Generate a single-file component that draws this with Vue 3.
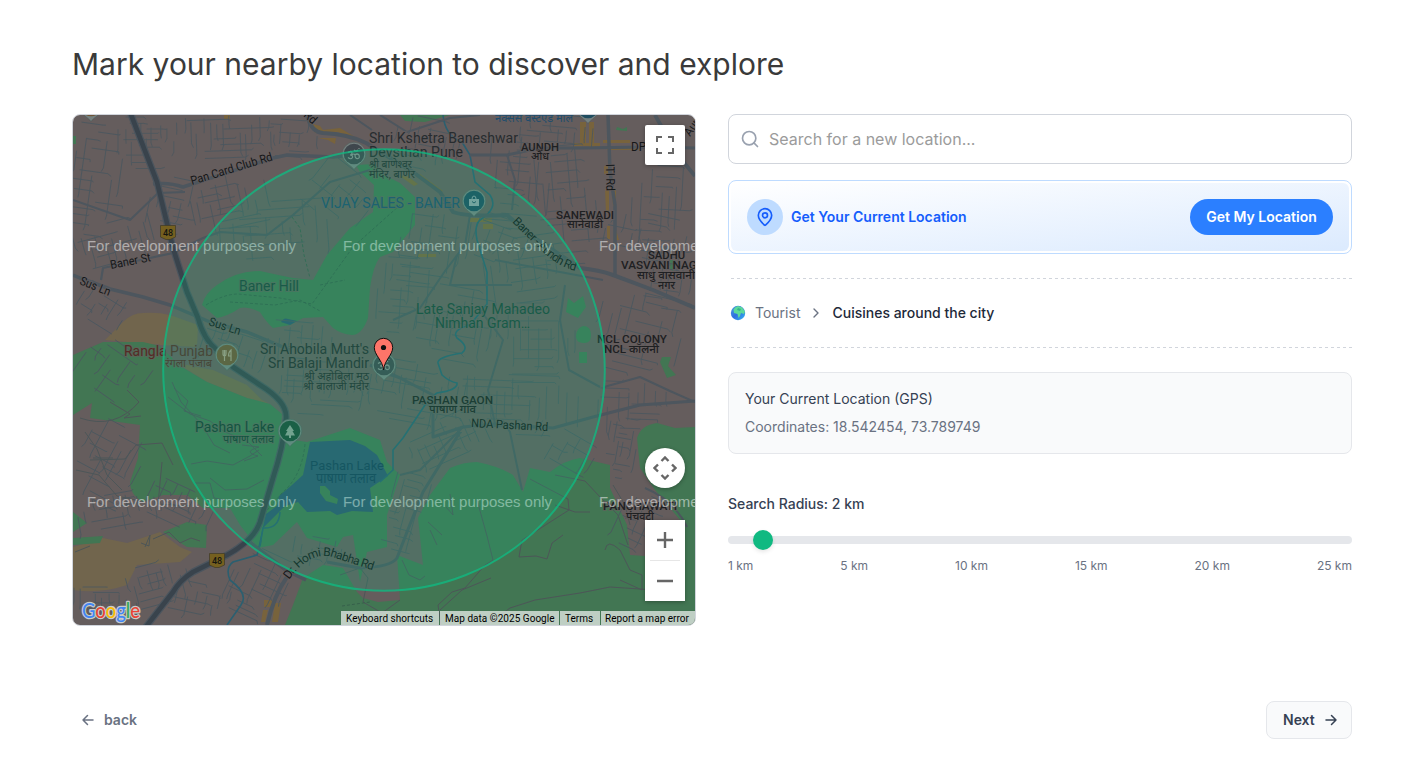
<script setup>
import { ref } from 'vue'

const ticks = ['1 km', '5 km', '10 km', '15 km', '20 km', '25 km']
const radius = ref(2)
const query = ref('')

const parks = [
  'M202 305Q205 293 217 285Q236 271 260 271Q278 275 293 278L313 280L327 255L350 228L373 212L374 185L360 172L356 165L374 164L384 175L400 183L415 197V225L393 252L380 257Q373 266 370 288L368 318Q362 335 352 335Q341 334 333 328L323 317L303 318L290 325L273 328Q266 322 260 312Q248 306 240 308Q228 316 217 318Z',
  'M73 355L103 342L143 342L160 346L180 366L207 382L247 398L270 404L282 414L280 438L307 442L350 428L380 440L387 462L400 475L387 515V547L367 552L360 582L353 535L343 537L337 547L307 538L297 522L273 545L258 548L240 525L230 508H203L187 495H163L143 502Q130 495 130 482L138 458L140 425L90 418L92 403L73 415Z',
  'M73 512L87 523L73 532ZM73 538L103 536L100 543L73 545Z',
  'M163 532L187 522L207 525L206 548L187 547Z',
  'M303 578L323 565L343 568L357 592L363 598L378 602L400 600L397 555L423 565L418 518L430 495L450 468Q463 462 477 462Q498 466 513 475L523 492L530 468L550 472Q565 460 580 458L610 465V488L627 525L630 555L645 556L680 520L655 490L640 468L637 438Q641 425 657 423L675 428L695 427V625H285L293 605Z',
  'M400 115H450L425 122L405 121ZM670 260H675L673 271L670 269ZM662 357H671L668 366L676 375L667 378L660 362ZM568 298L574 303L583 296L586 307L578 318L566 312ZM579 352H587V363H579ZM617 127L623 129L627 127V131L616 130ZM73 136H76V144H73Z',
  'M583 326Q591 326 591 335T583 343T576 335T583 326Z'
]
const tans = [
  'M105 340L123 322Q132 313 143 313Q158 312 170 315L198 325L197 347L160 345Z',
  'M177 363L207 369L213 370L247 385L262 400L270 404L247 398L207 382L183 367Z',
  'M73 547L103 538L127 543L160 532L180 547L192 552L180 562L137 565L127 585Q100 594 73 590Z'
]
const yellow = [
  'M580 122H586V144H580ZM589 122H594V147H589ZM574 143H600V146H574ZM603 140H630V143H603ZM607 146H640V150H607ZM604 166H608V174H604ZM605 189H609V213H606ZM612 189H616V206H613ZM607 226H610V239H607ZM615 226L619 240H616ZM313 124L320 126L323 130L340 128L355 137L350 139L338 132L315 133ZM318 138L336 138L335 144L328 140ZM400 176L406 175L418 184L414 186ZM420 174L443 191L440 192L420 179ZM470 218H492V222H470ZM483 224H493V229H483ZM418 254H436V257H418ZM224 115H230V119H224ZM264 600H272V607H264ZM275 603H281L278 622H272ZM263 610H268L265 622H261Z'
]
const roads = [
  { w: 3.5, d: 'M153 184Q169 182 183 187L273 158L287 155L333 157L352 155' },
  { w: 4, d: 'M307 115Q311 132 323 133Q348 134 366 143L413 172L440 192L453 212Q466 217 507 215L530 235L580 268Q599 270 613 275L653 290L695 308' },
  { w: 3.5, d: 'M73 275L80 278L110 289L143 297L170 305L210 322L247 332L290 350' },
  { w: 2.2, d: 'M101 280L103 268L150 258L173 253L203 238L220 232L267 235L293 215L330 182L370 170' },
  { w: 3, d: 'M370 365L400 378L433 395V437L463 427L495 424L553 428L593 417L640 405L695 401' },
  { w: 3.5, d: 'M608 115L610 172L615 205V275' },
  { w: 3, d: 'M470 155L507 155L540 148H580L647 147L695 148' },
  { w: 3.8, d: 'M655 115Q667 137 681 159L695 176' },
  { w: 3.5, d: 'M247 540L287 571L306 580' },
  { w: 4, d: 'M267 625Q274 595 287 577' },
  { w: 3, d: 'M327 562L360 568Q391 567 397 558L407 532L423 492L460 432' },
  { w: 2, d: 'M380 115L407 132L450 118L480 115M350 115L372 130M507 155L515 180L512 210M457 255L450 285L512 285M463 427L420 470L400 475M503 421L510 432L522 490M645 488Q674 500 687 527M73 200L130 220L158 193L185 192' },
  { w: 2, d: 'M470 215L465 245L445 271L420 308L393 320M495 260L560 272L603 280M480 310L503 340L488 390L495 424M565 285L560 320L569 370L600 387M604 387L640 377L670 391L695 402' }
]
const river = [
  'M443 115Q445 136 462 142L470 155L475 182L490 195Q499 208 480 220Q474 225 477 240L487 272V304L470 325Q451 330 457 338Q470 347 462 353Q437 357 438 363L442 375Q450 382 457 383Q458 390 437 393Q429 398 423 408L403 438L393 450V470L380 482',
  'M280 512Q279 529 263 528L260 545L257 555L233 562Q225 568 230 580Q249 594 241 605L227 625'
]
const trails = [
  'M292 217L300 228L304 255L310 278',
  'M206 305Q224 294 238 294L280 298L312 304L353 247L400 205M320 285L345 280M230 302L275 305L300 300L320 311',
  'M305 444Q302 476 282 493L263 515M342 606L370 602'
]
const paths = [
  'M172 382L181 402L202 425L214 445L230 453M168 397L190 414L210 421L225 432L247 441L262 456M191 464L207 461L233 465L250 456L259 450M210 478L225 490L247 489L264 480M90 460L125 459L136 445L162 443L173 465M174 388L188 401L184 411L201 416M242 445L259 447Q242 452 258 456L244 461M80 418Q115 430 139 402L127 390M110 402L130 414L124 418L141 416M195 483L210 483L214 498L225 500M162 462L158 504L190 506',
  'M519 557L522 540L569 510L568 499L530 479M519 557L536 556L547 559L552 543L563 535M477 500L487 536L493 560L485 565L465 588L452 592L438 605L441 625M440 610L462 590L491 578M487 625L510 608L535 600L580 593L610 587L655 590M555 475L585 481L600 497L618 515L628 545M613 485L625 505L630 525M605 550Q607 538 620 550L630 570L642 575V590L620 580M555 505L575 512L590 512M450 494L453 515L446 507M428 522L442 535M430 530L437 545M402 560L409 575L420 580L425 576M340 575L360 568L368 578L363 602L382 613L400 600',
  'M153 539L169 532L180 543L191 538L200 541M145 547L150 535L149 546L141 543M75 552L90 546M85 432L97 449L107 475L122 490M93 458L113 458M76 470L99 475L117 496L140 501'
]

// Irregular street grids: centre, half extents, rotation, line spacing.
const districts = [
  [98, 185, 26, 60, 8, 9], [148, 143, 30, 26, 0, 7], [225, 136, 48, 24, -2, 8], [232, 205, 40, 32, -12, 9],
  [118, 245, 42, 24, -15, 9], [102, 310, 25, 20, 32, 8], [175, 206, 26, 28, 12, 10], [293, 140, 25, 20, 4, 8],
  [280, 235, 60, 34, -4, 12], [340, 195, 32, 28, 38, 10], [430, 145, 35, 26, 12, 9], [520, 185, 32, 50, 5, 9],
  [570, 205, 32, 60, -5, 9], [660, 200, 28, 55, 3, 9], [560, 135, 40, 20, 5, 8], [648, 240, 44, 26, 12, 9],
  [438, 245, 38, 42, 8, 8], [525, 275, 40, 38, -8, 10], [405, 300, 28, 42, 4, 8], [455, 325, 40, 38, 10, 8],
  [535, 345, 44, 42, 0, 9], [640, 335, 44, 42, 14, 10], [415, 395, 52, 32, 10, 8], [325, 390, 44, 28, 3, 8],
  [520, 405, 64, 30, 2, 9], [452, 440, 42, 24, -24, 9], [636, 408, 38, 26, 2, 9], [622, 450, 16, 32, 10, 7],
  [565, 450, 34, 18, 30, 10], [640, 522, 22, 28, 25, 8], [235, 350, 34, 17, 18, 8], [405, 515, 18, 42, 15, 8],
  [108, 466, 31, 42, 28, 10], [120, 514, 42, 21, -10, 9], [180, 507, 34, 20, 25, 9], [108, 605, 34, 18, 0, 8],
  [160, 584, 32, 22, -15, 8], [200, 604, 32, 20, 12, 9], [260, 585, 30, 34, 25, 8], [320, 552, 27, 14, 10, 8],
  [111, 376, 34, 32, 35, 13], [300, 342, 32, 20, 5, 9], [500, 245, 28, 27, 20, 10], [668, 280, 24, 30, 8, 8]
]
let seed = 4817
const rnd = () => {
  seed = (seed * 16807) % 2147483647
  return seed / 2147483647
}
const streets = districts.map(([x, y, w, h, a, s]) => {
  let d = ''
  for (let v = -h; v < h; v += s * (0.6 + rnd() * 0.7)) {
    const start = -w + rnd() * w
    d += `M${start.toFixed(1)} ${v.toFixed(1)}h${(w * (0.4 + rnd() * 0.7)).toFixed(1)}l${(rnd() * 4).toFixed(1)} ${(rnd() * 5 - 2).toFixed(1)}`
  }
  for (let u = -w; u < w; u += s * (0.6 + rnd() * 0.8)) {
    const start = -h + rnd() * h
    d += `M${u.toFixed(1)} ${start.toFixed(1)}v${(h * (0.3 + rnd() * 0.7)).toFixed(1)}l${(rnd() * 4 - 2).toFixed(1)} 4`
  }
  return { d, t: `translate(${x} ${y}) rotate(${a})` }
})

// x is the left edge, w the drawn width of the label.
const labels = [
  { t: 'Shri Kshetra Baneshwar', x: 369, y: 143, w: 149, c: 'poi' },
  { t: 'Devsthan Pune', x: 369, y: 157, w: 94, c: 'poi' },
  { t: 'श्री बाणेश्वर', x: 369, y: 168, w: 43, c: 'poi hi' },
  { t: 'मंदिर, बाणेर', x: 369, y: 178, w: 46, c: 'poi hi' },
  { t: 'VIJAY SALES - BANER', x: 321, y: 208, w: 139, c: 'poi shop' },
  { t: 'Baner Hill', x: 239, y: 291, w: 60, c: 'poi nature' },
  { t: 'Late Sanjay Mahadeo', x: 416, y: 314, w: 134, c: 'poi nature' },
  { t: 'Nimhan Gram…', x: 435, y: 328, w: 95, c: 'poi nature' },
  { t: 'Rangla Punjab', x: 124, y: 356, w: 89, c: 'poi food' },
  { t: 'रंगला पंजाब', x: 165, y: 367, w: 47, c: 'poi food hi' },
  { t: "Sri Ahobila Mutt's", x: 260, y: 354, w: 109, c: 'poi' },
  { t: 'Sri Balaji Mandir', x: 268, y: 368, w: 101, c: 'poi' },
  { t: 'श्री अहोबिला मठ', x: 304, y: 380, w: 65, c: 'poi hi' },
  { t: 'श्री बालाजी मंदीर', x: 303, y: 390, w: 66, c: 'poi hi' },
  { t: 'Pashan Lake', x: 195, y: 432, w: 79, c: 'poi nature dark' },
  { t: 'पाषाण तलाव', x: 223, y: 443, w: 51, c: 'poi nature dark hi' },
  { t: 'Pashan Lake', x: 310, y: 470, w: 74, c: 'water' },
  { t: 'पाषाण तलाव', x: 316, y: 483, w: 60, c: 'water hi12' },
  { t: 'AUNDH', x: 521, y: 151, w: 38, c: 'area' },
  { t: 'औंध', x: 531, y: 160, w: 18, c: 'area hi' },
  { t: 'SANEWADI', x: 556, y: 219, w: 58, c: 'area' },
  { t: 'सानेवाडी', x: 567, y: 228, w: 36, c: 'area hi' },
  { t: 'SADHU', x: 648, y: 259, w: 37, c: 'area' },
  { t: 'VASVANI NAGAR', x: 621, y: 269, w: 91, c: 'area' },
  { t: 'साधु वासवानी', x: 637, y: 279, w: 58, c: 'area hi' },
  { t: 'नगर', x: 658, y: 289, w: 17, c: 'area hi' },
  { t: 'NCL COLONY', x: 597, y: 343, w: 70, c: 'area' },
  { t: 'NCL कॉलनी', x: 604, y: 353, w: 55, c: 'area hi' },
  { t: 'PASHAN GAON', x: 412, y: 404, w: 81, c: 'area' },
  { t: 'पाषाण गांव', x: 429, y: 413, w: 47, c: 'area hi' },
  { t: 'PANCHAWATI', x: 603, y: 510, w: 74, c: 'area' },
  { t: 'पंचवटी', x: 626, y: 520, w: 28, c: 'area hi' },
  { t: 'नेक्सस वेस्टएंड मॉल', x: 495, y: 122, w: 78, c: 'poi shop hi' },
  { t: 'DP Rd', x: 631, y: 151, w: 32, c: 'road' },
  { t: 'Pan Card Club Rd', x: 192, y: 185, w: 85, c: 'road', r: -17 },
  { t: 'Baner St', x: 111, y: 269, w: 41, c: 'road', r: -11 },
  { t: 'Sus Ln', x: 79, y: 284, w: 32, c: 'road', r: 22 },
  { t: 'Sus Ln', x: 208, y: 325, w: 33, c: 'road', r: 18 },
  { t: 'ITI Rd', x: 606, y: 164, w: 27, c: 'road', r: 89 },
  { t: 'NDA Pashan Rd', x: 471, y: 427, w: 77, c: 'road', r: 3 },
  { t: 'Rd', x: 303, y: 116, w: 13, c: 'road', r: 42 },
  { t: 'Aundh', x: 690, y: 137, w: 32, c: 'road', r: -55 }
]

const pins = [
  { x: 354, y: 155, f: '#3f474d', k: 'om' },
  { x: 474, y: 202, f: '#204d60', k: 'bag' },
  { x: 227, y: 356, f: '#6f5335', k: 'fork' },
  { x: 290, y: 432, f: '#1d4a37', k: 'tree' },
  { x: 384, y: 366, f: '#3f474d', k: 'om' },
  { x: 588, y: 109, f: '#204d60', k: 'bag' },
  { x: 91, y: 107, f: '#6f5335', k: 'fork' }
]
const watermarks = [[87, 251], [343, 251], [599, 251], [87, 507], [343, 507], [599, 507]]
</script>

<template>
  <main class="page">
    <h1>Mark your nearby location to discover and explore</h1>

    <div class="columns">
      <section class="map">
        <svg class="canvas" viewBox="73 115 622 510">
          <rect x="73" y="115" width="622" height="510" fill="#655d5d" />
          <path v-for="(d, i) in tans" :key="'t' + i" :d="d" fill="#71654d" />
          <path v-for="(d, i) in parks" :key="'p' + i" :d="d" fill="#427653" />
          <path d="M310 442L350 440L365 446L377 455L388 476L370 488L373 512L352 511L337 515L330 511L307 512L298 502L285 506L263 528L261 545L258 548L266 514L277 506L279 496L292 485L303 475Z" fill="#2f556f" />
          <path d="M320 486L325 486L330 491L330 495L338 499L337 504L326 501L320 493Z" fill="#427653" />
          <path d="M281 322Q284 317 288 319L297 321L290 325Z" fill="#2f556f" />
          <path v-for="(d, i) in yellow" :key="'y' + i" :d="d" fill="#78633c" />
          <g fill="none" stroke="#4b575f" stroke-width=".85">
            <path v-for="(s, i) in streets" :key="'s' + i" :d="s.d" :transform="s.t" />
          </g>
          <g fill="none" stroke="#4d5658" stroke-width="1" stroke-linejoin="round">
            <path v-for="(d, i) in paths" :key="'w' + i" :d="d" />
          </g>
          <g fill="none" stroke="#345b49" stroke-width=".8" stroke-dasharray="3 2">
            <path v-for="(d, i) in trails" :key="'r' + i" :d="d" />
          </g>
          <g fill="none" stroke="#2b5f70" stroke-width="1.6">
            <path v-for="(d, i) in river" :key="'v' + i" :d="d" />
          </g>
          <g fill="none" stroke="#4d565e" stroke-linejoin="round">
            <path v-for="(r, i) in roads" :key="'o' + i" :d="r.d" :stroke-width="r.w" />
          </g>
          <g fill="none" stroke-linejoin="round">
            <path class="highway-edge" d="M130 112L157 182L173 248L187 292L198 318Q204 340 217 350L233 367L260 385Q288 402 286 419Q283 448 273 478L260 522Q254 540 227 555L193 572Q180 580 173 592L145 628" />
            <path class="highway" d="M130 112L157 182L173 248L187 292L198 318Q204 340 217 350L233 367L260 385Q288 402 286 419Q283 448 273 478L260 522Q254 540 227 555L193 572Q180 580 173 592L145 628" />
          </g>
          <g v-for="(p, i) in [[168, 232], [217, 560]]" :key="'h' + i" :transform="`translate(${p[0]} ${p[1]})`">
            <path d="M-7.5-6.5H7.5V5L2 7.5H-2L-7.5 5Z" fill="#75601f" stroke="#3f3a26" stroke-width=".7" />
            <text class="shield" y="4">48</text>
          </g>

          <g v-for="(p, i) in pins" :key="'n' + i" :transform="`translate(${p.x} ${p.y})`">
            <path d="M0 14.500C-3 10-11.800 7-11.800-1A11.800 11.800 0 0 1 11.800-1C11.800 7 3 10 0 14.500Z" fill="#75807f" stroke="#505c5a" stroke-width=".6" />
            <circle cy="-1" r="10.3" :fill="p.f" />
            <path v-if="p.k === 'tree'" d="M0-7L4-1H2.500L5 3.500H1V6H-1V3.500H-5L-2.500-1H-4Z" fill="#8b9e93" />
            <g v-else-if="p.k === 'bag'"><path d="M-5-3H5V4H-5Z" fill="#8b9ea6" /><path d="M-2-3Q-2-6 0-6Q2-6 2-3" fill="none" stroke="#8b9ea6" /><path d="M-2-.5Q0 2.500 2-.5" fill="none" stroke="#204d60" /></g>
            <path v-else-if="p.k === 'fork'" d="M-4-6V-2Q-4 0-2.500 0T-1-2V-6M-2.500-6V5M4 5V-6Q1.500-4 1.500 0H4" fill="none" stroke="#a69984" stroke-width="1.2" />
            <path v-else d="M-6-2.500Q-2-5-2-2Q-2 0-4 0Q-1 0-1.500 2.500Q-3 5-6 2.500M-2 0Q0-2 1 0Q1 4 4 3.500Q6 3 5 0Q3-2 1 0M0-5Q2-3 4-5M5-7V-6" fill="none" stroke="#858e8c" stroke-width="1.200" />
          </g>

          <text
            v-for="(l, i) in labels" :key="'l' + i" :class="['label', l.c]" :textLength="l.w"
            lengthAdjust="spacingAndGlyphs" :transform="`translate(${l.x} ${l.y}) rotate(${l.r || 0})`"
          >{{ l.t }}</text>
          <path id="aundhRoad" d="M512 222Q528 238 543 252Q559 268 580 272" fill="none" />
          <text class="label road"><textPath href="#aundhRoad" textLength="81">Baner - Aundh Rd</textPath></text>
          <path id="homiRoad" d="M289 580Q311 549 335 558L375 571" fill="none" />
          <text class="label road"><textPath href="#homiRoad" textLength="95">Dr. Homi Bhabha Rd</textPath></text>

          <text v-for="(w, i) in watermarks" :key="'m' + i" class="watermark" :x="w[0]" :y="w[1]" textLength="209" lengthAdjust="spacingAndGlyphs">For development purposes only</text>
          <circle cx="384" cy="370" r="220.8" fill="#10b981" fill-opacity=".2" stroke="#10b981" stroke-opacity=".8" stroke-width="2" />

          <path d="M383.500 370C382.500 360 374.300 355 374.300 347.500A9.200 9.200 0 0 1 392.700 347.500C392.700 355 384.500 360 383.500 370Z" fill="#fe7569" stroke="#111" />
          <circle cx="383.5" cy="347.5" r="2.6" fill="#111" />

          <text class="brand" x="82" y="618" textLength="58" lengthAdjust="spacingAndGlyphs"><tspan fill="#4285f4">G</tspan><tspan fill="#ea4335">o</tspan><tspan fill="#fbbc04">o</tspan><tspan fill="#4285f4">g</tspan><tspan fill="#34a853">l</tspan><tspan fill="#ea4335">e</tspan></text>
        </svg>

        <button class="ctl full" aria-label="Fullscreen">
          <svg viewBox="0 0 18 18"><path d="M0 0v6h2V2h4V0H0zm16 0h-4v2h4v4h2V0h-2zm0 16h-4v2h6v-6h-2v4zM2 12H0v6h6v-2H2v-4z" fill="#666" /></svg>
        </button>
        <button class="ctl pan" aria-label="Map camera">
          <svg viewBox="0 0 24 24"><path d="M8.500 5L12 1.500L15.500 5M8.500 19L12 22.500L15.500 19M5 8.500L1.500 12L5 15.500M19 8.500L22.500 12L19 15.500" fill="none" stroke="#666" stroke-width="2.4" /></svg>
        </button>
        <div class="ctl zoom">
          <button aria-label="Zoom in"><svg viewBox="0 0 18 18"><path d="M1 9H17M9 1V17" stroke="#666" stroke-width="2.4" /></svg></button>
          <i></i>
          <button aria-label="Zoom out"><svg viewBox="0 0 18 18"><path d="M1 9H17" stroke="#666" stroke-width="2.4" /></svg></button>
        </div>
        <div class="credits">
          <span class="c1">Keyboard shortcuts</span><span class="c2">Map data ©2025 Google</span><span class="c3">Terms</span><span class="c4">Report a map error</span>
        </div>
      </section>

      <section class="panel">
        <label class="search">
          <svg viewBox="0 0 24 24"><circle cx="11" cy="11" r="8" /><path d="M21 21l-4.300-4.300" /></svg>
          <input v-model="query" placeholder="Search for a new location..." />
        </label>

        <div class="locate">
          <div class="locate-inner">
            <span class="badge">
              <svg viewBox="0 0 24 24"><path d="M20 10c0 4.990-5.540 10.190-7.400 11.800a1 1 0 0 1-1.200 0C9.540 20.190 4 14.990 4 10a8 8 0 0 1 16 0" /><circle cx="12" cy="10" r="3" /></svg>
            </span>
            <strong>Get Your Current Location</strong>
            <button>Get My Location</button>
          </div>
        </div>

        <nav class="crumbs">
          <svg class="globe" viewBox="0 0 16 16">
            <defs><linearGradient id="sea" x1="0" y1="0" x2="1" y2="1"><stop stop-color="#4a9fe0" /><stop offset=".5" stop-color="#2f6fe0" /><stop offset="1" stop-color="#35b8f2" /></linearGradient></defs>
            <circle cx="8" cy="8" r="7.2" fill="url(#sea)" />
            <path d="M3.500 4.500Q5 1.500 8 1L12 2.200L15 6.500L14 9L11 8L10 11L8.500 13L7.500 9L4 8Z" fill="#5bd99a" />
            <path d="M8 3L11 4L10 6L7 5Z" fill="#35b58b" />
          </svg>
          <span>Tourist</span>
          <svg class="chev" viewBox="0 0 16 16"><path d="M6 4l4 4-4 4" /></svg>
          <b>Cuisines around the city</b>
        </nav>

        <div class="gps">
          <p class="gps-title">Your Current Location (GPS)</p>
          <p>Coordinates: 18.542454, 73.789749</p>
        </div>

        <div class="radius">
          <p>Search Radius: {{ radius }} km</p>
          <div class="track"><span class="thumb"></span></div>
          <div class="ticks"><span v-for="t in ticks" :key="t">{{ t }}</span></div>
        </div>
      </section>
    </div>

    <footer>
      <button class="back">
        <svg viewBox="0 0 16 16"><path d="M13 8H3M7.500 3.500L3 8l4.500 4.500" /></svg>back
      </button>
      <button class="next">
        Next<svg viewBox="0 0 16 16"><path d="M3 8h10M8.500 3.500L13 8l-4.500 4.500" /></svg>
      </button>
    </footer>
  </main>
</template>

<style>
body { background: #fff; }
</style>

<style scoped>
* { box-sizing: border-box; }
.page {
  height: 774px; padding: 44px 70px 35px 72px; display: flex; flex-direction: column;
  font-family: Inter, "Liberation Sans", sans-serif; font-size: 14px; line-height: 20px; color: #364153;
}
h1 { margin: 0; height: 70px; font-size: 30px; line-height: 40px; font-weight: 400; color: #3a3a3a; white-space: nowrap; }
p { margin: 0; }
button { font: inherit; color: inherit; border: 0; padding: 0; background: none; }
.columns { display: grid; grid-template-columns: 624px 624px; gap: 32px; }

.map { position: relative; height: 512px; border: 1px solid #d1d5dc; border-radius: 8px; overflow: hidden; }
.canvas { display: block; width: 622px; height: 510px; }
.highway-edge { stroke: #4b555e; stroke-width: 7; }
.highway { stroke: #39434c; stroke-width: 4.6; }
.label { font-family: Roboto, "Noto Sans", sans-serif; font-size: 12px; fill: #222629; paint-order: stroke; stroke: #655d5d; stroke-opacity: .6; stroke-width: 2px; }
.label.poi { font-size: 14px; fill: #272c2f; }
.label.poi.hi, .label.hi { font-size: 11.5px; }
.label.water.hi12 { font-size: 13.5px; }
.label.poi.shop { fill: #204d6d; }
.label.poi.nature { fill: #1b443a; }
.label.poi.dark { fill: #153b30; }
.label.poi.food { fill: #552b26; }
.label.water { font-size: 13px; fill: #173e59; stroke: none; }
.label.area { font-size: 10.5px; font-weight: 500; fill: #1e2022; }
.label.road { font-size: 12px; fill: #151719; }
.label.area.hi { font-size: 11.5px; }
.shield { font: 500 9px Roboto, sans-serif; text-anchor: middle; fill: #16160f; }
.watermark { font: 15px "Liberation Sans", Arial, sans-serif; fill: #fff; fill-opacity: .5; }
.brand { font: 500 21px Lato, sans-serif; paint-order: stroke; stroke: #c8cccb; stroke-width: 2.5px; stroke-linejoin: round; }

.ctl { position: absolute; right: 10px; width: 40px; background: #fff; box-shadow: 0 1px 4px rgba(0, 0, 0, .3); display: flex; align-items: center; justify-content: center; }
.full { top: 10px; height: 40px; border-radius: 2px; }
.full svg, .zoom svg { width: 18px; height: 18px; display: block; }
.pan { top: 333px; height: 40px; border-radius: 50%; }
.pan svg { width: 24px; height: 24px; }
.zoom { top: 405px; height: 81px; flex-direction: column; }
.zoom button { height: 40px; width: 40px; display: flex; align-items: center; justify-content: center; }
.zoom i { height: 1px; width: 30px; background: #e6e6e6; }
.credits { position: absolute; right: 0; bottom: 0; display: flex; height: 14px; gap: 1px; font: 10px/15px Roboto, sans-serif; color: #000; white-space: nowrap; }
.credits span { height: 14px; background: rgba(245, 245, 245, .7); padding-left: 5px; letter-spacing: .03px; }
.c1 { width: 98px; } .c2 { width: 119px; } .c3 { width: 40px; } .c4 { width: 94px; }
.credits .c4 { padding-left: 4px; }

.panel { display: flex; flex-direction: column; }
.search { height: 50px; display: flex; align-items: center; gap: 9px; padding: 0 11px; border: 1px solid #d1d5dc; border-radius: 8px; }
.search svg { width: 20px; height: 20px; fill: none; stroke: #99a1af; stroke-width: 2; stroke-linecap: round; }
.search input { flex: 1; border: 0; outline: 0; padding: 0; font: 16px/24px Inter, sans-serif; background: none; }
.search input::placeholder { color: #9b9b9b; opacity: 1; }
.locate { height: 74px; margin-top: 16px; padding: 2px; border: 1px solid #bedbff; border-radius: 8px; }
.locate-inner { height: 68px; border-radius: 6px; display: flex; align-items: center; padding: 0 16px; background: linear-gradient(to bottom right, #fff, #dbeafe); }
.badge { width: 36px; height: 36px; border-radius: 50%; background: #bedbff; display: flex; align-items: center; justify-content: center; margin-right: 8px; }
.badge svg { width: 20px; height: 20px; fill: none; stroke: #155dfc; stroke-width: 2; }
.locate strong { font-weight: 600; color: #155dfc; flex: 1; }
.locate button { width: 143px; height: 36px; border-radius: 18px; background: #2b7fff; color: #fff; font-weight: 600; }
.crumbs {
  height: 70px; margin-top: 24px; display: flex; align-items: center; color: #6a7282;
  --dash: repeating-linear-gradient(90deg, transparent 0 3px, #d1d5dc 3px 6px);
  background: var(--dash) top / 100% 1px no-repeat, var(--dash) bottom / 100% 1px no-repeat;
}
.globe { width: 16px; height: 16px; margin: 0 9px 0 2px; }
.chev { width: 16px; height: 16px; margin: 0 8px; fill: none; stroke: #6a7282; stroke-width: 1.4; stroke-linecap: round; stroke-linejoin: round; }
.crumbs b { font-weight: 500; color: #1e2939; }
.gps { height: 82px; margin-top: 24px; padding: 16px; border: 1px solid #e5e7eb; border-radius: 8px; background: #f9fafb; color: #6a7282; }
.gps-title { margin-bottom: 8px; color: #364153; }
.radius { margin-top: 40px; }
.radius p { font-weight: 500; }
.track { height: 8px; margin-top: 22px; border-radius: 4px; background: #e5e7eb; display: flex; align-items: center; }
.thumb { width: 20px; height: 20px; margin-left: 25px; border-radius: 50%; background: #10b981; box-shadow: 0 2px 4px rgba(0, 0, 0, .1); }
.ticks { display: flex; justify-content: space-between; margin-top: 14px; font-size: 12px; line-height: 16px; color: #6a7282; }

footer { margin-top: auto; display: flex; justify-content: space-between; align-items: center; font-weight: 600; }
footer button { display: flex; align-items: center; height: 38px; gap: 8px; }
footer svg { width: 16px; height: 16px; fill: none; stroke: currentColor; stroke-width: 1.5; stroke-linecap: round; stroke-linejoin: round; }
.back { color: #6a7282; padding-left: 8px; }
.next { width: 86px; padding-left: 16px; border: 1px solid #e5e7eb; border-radius: 8px; background: #f9fafb; }
</style>
